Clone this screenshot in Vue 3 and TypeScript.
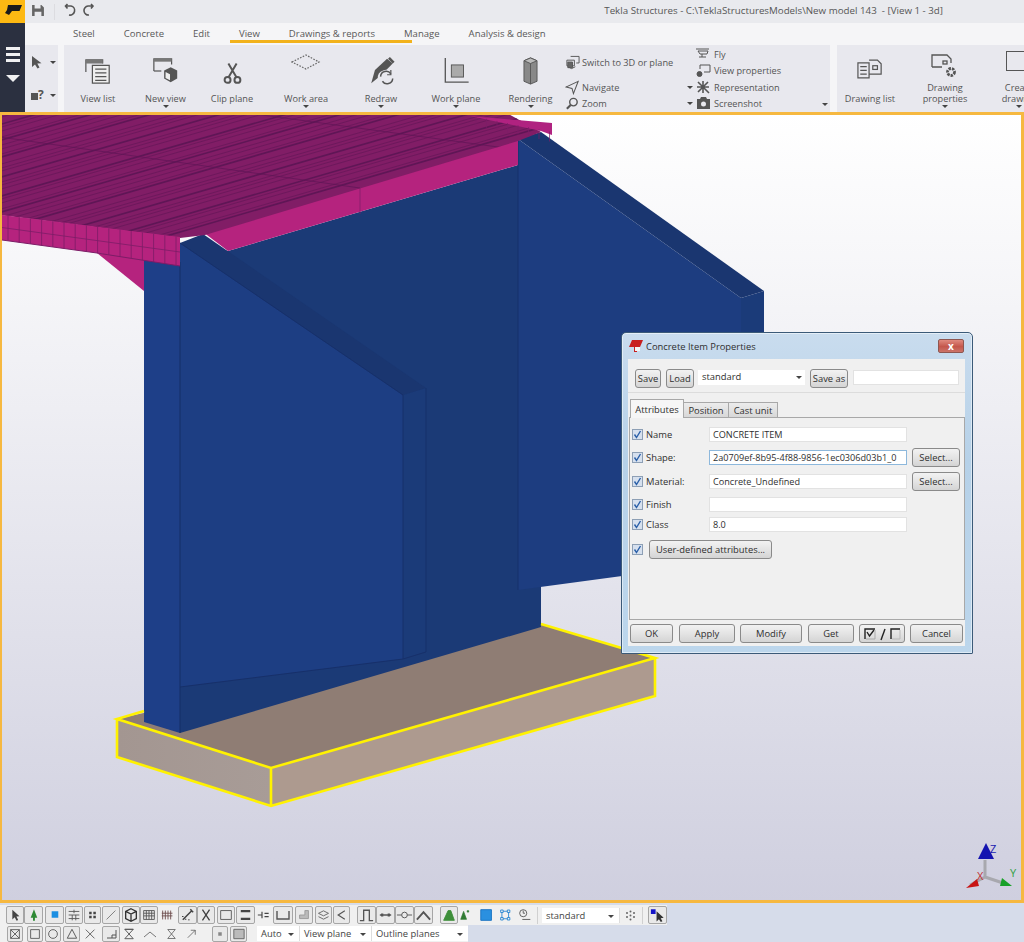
<script setup lang="ts">
// Tekla Structures window: ribbon, 3d model view, properties dialog, bottom toolbars

const tabs = ['Steel', 'Concrete', 'Edit', 'View', 'Drawings & reports', 'Manage', 'Analysis & design']

const bigTools = [
  { id: 'list', label: 'View list', w: 68, caret: false },
  { id: 'newview', label: 'New view', w: 67, caret: true },
  { id: 'clip', label: 'Clip plane', w: 66, caret: false },
  { id: 'area', label: 'Work area', w: 82, caret: true },
  { id: 'redraw', label: 'Redraw', w: 68, caret: true },
  { id: 'plane', label: 'Work plane', w: 82, caret: true },
  { id: 'render', label: 'Rendering', w: 67, caret: true },
]

// bridge slab hatching, runs along the long edge
const steps = [5, 3, 6, 4, 3, 7, 4, 3, 5, 6, 3, 4, 7, 3, 5, 4]
const slabLines: { y1: number; y2: number; w: number }[] = []
let off = 0
for (let i = 0; off < 260; i++) {
  off += steps[i % steps.length]
  const yA = 237 - off + 0.29 * 230
  const yB = 237 - off * 0.98 - 0.29 * 380
  slabLines.push({ y1: yA, y2: yB, w: i % 4 === 0 ? 1.6 : 0.6 })
}

const edgeCols = Array.from({ length: 16 }, (_, i) => {
  const x = 8 + i * 11.2
  const bottom = x < 97 ? 240 + (x - 2) * 0.137 : 253 + (x - 97) * 0.157
  return { x, top: 215 + (x - 2) * 0.124, bottom }
})
const tipCols = Array.from({ length: 8 }, (_, i) => {
  const x = 476 + i * 10.5
  return { x, top: 115.5 + (x - 470) * 0.2, bottom: 116 + (x - 470) * 0.22 + 8 }
})

type Tool = { x: number; w: number; box?: boolean; d?: string; fill?: string; stroke?: string; sw?: number }
const ink = '#555'
const row1: Tool[] = [
  { x: 6, w: 18, box: true, d: 'M6 3V14L8.6 11.5 10.8 15.5 12.6 14.5 10.6 10.6 14 10.4Z', fill: '#444' },
  { x: 24, w: 19, box: true, d: 'M9.5 3L13 12H10.5V15H8.5V12H6Z', fill: '#2f8a35' },
  { x: 45, w: 19, box: true, d: 'M6 5H13V12H6Z', fill: '#1c8fe2' },
  { x: 65, w: 18, box: true, d: 'M3 5H15M3 9H15M3 13H15M9 3V7M7 9V15M11 9V15' },
  { x: 84, w: 17, box: true, d: 'M5 5H8V8H5ZM10 5H13V8H10ZM5 10H8V13H5ZM10 10H13V13H10Z', fill: '#444' },
  { x: 102, w: 18, box: true, d: 'M4 14L14 4', stroke: '#777' },
  { x: 122, w: 18, box: true, d: 'M9 2L15 5V13L9 16 3 13V5ZM3 5L9 8 15 5M9 8V16', sw: 1.5, stroke: '#333' },
  { x: 140, w: 18, box: true, d: 'M3 4H15V14H3ZM3 7H15M3 10H15M6 4V14M9 4V14M12 4V14' },
  { x: 160, w: 16, d: 'M3 4V14M6 4V14M9 4V14M12 4V14M2 7H14M2 10H14', stroke: '#6b4a4a' },
  { x: 178, w: 19, box: true, d: 'M4 14L14 4M12 3L15 6M4 10V11M7 13V14M10 14H11', stroke: '#444', sw: 1.6 },
  { x: 197, w: 18, box: true, d: 'M5 3L13 15M13 3L5 15', sw: 1.5, stroke: '#444' },
  { x: 217, w: 18, box: true, d: 'M3 4H15V14H3Z' },
  { x: 236, w: 19, box: true, d: 'M4 5H14M4 13H14', sw: 2.4, stroke: '#444' },
  { x: 257, w: 15, d: 'M1 9H6M6 5V13M9 7H14M9 11H14', stroke: '#444', sw: 1.4 },
  { x: 273, w: 20, box: true, d: 'M3 5V13H15V5', sw: 1.4 },
  { x: 295, w: 18, box: true, d: 'M4 13H14V4H10V9H4Z', fill: '#bbb', stroke: '#999' },
  { x: 315, w: 17, box: true, d: 'M3 7L9 4 15 7 9 10ZM3 11L9 14 15 11' },
  { x: 333, w: 17, box: true, d: 'M13 4L5 9 13 14', sw: 1.4 },
  { x: 357, w: 19, box: true, d: 'M2 15H6V4H12V15H16', sw: 1.4 },
  { x: 376, w: 19, box: true, d: 'M3 9H15M5 8H6V10H5ZM12 8H13V10H12Z', sw: 1.4 },
  { x: 395, w: 19, box: true, d: 'M1 9H6M12 9H17M6 9A3 3 0 1 0 12 9A3 3 0 1 0 6 9Z' },
  { x: 414, w: 19, box: true, d: 'M2 14L9 6 16 14', sw: 2 },
  { x: 440, w: 18, box: true, d: 'M3 15L8 4H11L15 15Z', fill: '#3e8f3a', stroke: '#3e8f3a' },
  { x: 460, w: 13, d: 'M5 4L9 15H1ZM10 3H12V5H10Z', fill: '#2f7a32', stroke: '#2f7a32' },
  { x: 479, w: 16, d: 'M2 3H14V15H2Z', fill: '#2a90e0', stroke: '#1670c0' },
  { x: 499, w: 15, d: 'M2 3H5V6H2ZM10 3H13V6H10ZM2 12H5V15H2ZM10 12H13V15H10ZM5 4.5H10M5 13.5H10M3.5 6V12M11.5 6V12', stroke: '#1a80d0' },
  { x: 517, w: 16, d: 'M3 7A4 4 0 1 0 11 7A4 4 0 1 0 3 7ZM7 4V7H9M6 14H15' },
]
const row2: Tool[] = [
  { x: 7, w: 16, box: true, d: 'M3 3H13V13H3ZM3 3L13 13M13 3L3 13' },
  { x: 27, w: 16, box: true, d: 'M3 3H13V13H3Z' },
  { x: 45, w: 16, box: true, d: 'M3 8A5 5 0 1 0 13 8A5 5 0 1 0 3 8Z' },
  { x: 63, w: 17, box: true, d: 'M3.5 12.5L8.5 3 13.5 12.5Z' },
  { x: 84, w: 14, d: 'M2 3L12 13M12 3L2 13' },
  { x: 102, w: 18, box: true, d: 'M4 12H13V4M9 12V9H13', stroke: '#555' },
  { x: 122, w: 15, d: 'M3 3H12L3 13H12ZM3 3H12', stroke: '#555' },
  { x: 142, w: 16, d: 'M2 11L8 6 14 11', stroke: '#777' },
  { x: 167, w: 12, d: 'M1 2H11L1 14H11Z', stroke: '#555' },
  { x: 187, w: 12, d: 'M1 13L11 3M5 3H11V9', stroke: '#555' },
  { x: 212, w: 16, box: true, d: 'M6 6H10V10H6Z', fill: '#888' },
  { x: 230, w: 17, box: true, d: 'M3 3H14V13H3Z', fill: '#bbb', stroke: '#666' },
]
const withGaps = (list: Tool[]) => list.map((t, i) => ({
  ...t,
  gap: i === 0 ? t.x : t.x - list[i - 1].x - list[i - 1].w,
}))
const tools1 = withGaps(row1)
const tools2 = withGaps(row2)

const attrRows = [
  { label: 'Name', value: 'CONCRETE ITEM', select: false, focus: false, cls: '' },
  { label: 'Shape:', value: '2a0709ef-8b95-4f88-9856-1ec0306d03b1_0', select: true, focus: true, cls: 'tall' },
  { label: 'Material:', value: 'Concrete_Undefined', select: true, focus: false, cls: '' },
  { label: 'Finish', value: '', select: false, focus: false, cls: 'short' },
  { label: 'Class', value: '8.0', select: false, focus: false, cls: 'short' },
]
</script>

<template>
  <div class="app">
    <header class="titlebar">
      <div class="logo">
        <svg width="25" height="23" viewBox="0 0 25 23"><path d="M8 5H22L19.5 11H12L9 15 5 13 7 10Z" fill="#1b1b1b" /></svg>
      </div>
      <svg class="save" width="12" height="11" viewBox="0 0 14 13"><path d="M0 0H11L14 3V13H0ZM3 0V4H10V0ZM3 8V13H11V8Z" fill="#666" fill-rule="evenodd" /></svg>
      <span class="qsep" />
      <svg class="undo" width="32" height="14" viewBox="0 0 32 14" fill="none" stroke="#555" stroke-width="1.6">
        <path d="M2 3H7A4.5 4.5 0 0 1 5 12M3.5 1L1.5 3 3.5 5.5" />
        <path d="M28 3H24A4.5 4.5 0 0 0 25 12M27 1L29 3 27 5.5" />
      </svg>
      <span class="apptitle">Tekla Structures - C:\TeklaStructuresModels\New model 143&nbsp; - [View 1 - 3d]</span>
    </header>

    <nav class="tabbar">
      <span class="sidecap" />
      <div class="tabs">
        <span v-for="t in tabs" :key="t" class="tab">{{ t }}</span>
        <span class="tab-mark" />
      </div>
    </nav>

    <section class="ribbon">
      <aside class="side">
        <div class="burger"><i /><i /><i /></div>
        <span class="side-arrow" />
      </aside>

      <div class="pick">
        <div class="pick-row">
          <svg width="12" height="14" viewBox="0 0 12 14"><path d="M1 1V12L4 9.5 6.5 13.5 8.5 12.5 6.3 8.6 10.5 8.2Z" fill="#555" /></svg>
          <span class="caret" />
        </div>
        <div class="pick-row low">
          <span class="helpmark"><i />?</span>
          <span class="caret" />
        </div>
      </div>

      <div class="group view-group">
        <div v-for="tool in bigTools" :key="tool.id" class="big" :style="{ width: tool.w + 'px' }">
          <div class="big-icon">
            <svg v-if="tool.id === 'list'" width="28" height="28" viewBox="0 0 30 30" fill="none" stroke="#555" stroke-width="1.3">
              <path d="M2 16V3H20V7" /><path d="M2 3H20V7H2Z" fill="#777" stroke="none" />
              <path d="M9 9H27V28H9ZM12 13H24M12 17H24M12 21H24M12 25H24" fill="#eee" />
            </svg>
            <svg v-else-if="tool.id === 'newview'" width="28" height="28" viewBox="0 0 30 30" fill="none" stroke="#555" stroke-width="1.3">
              <path d="M2 15V2H21V8" /><path d="M2 2H21V5H2Z" fill="#777" stroke="none" />
              <path d="M2 15H10" />
              <path d="M20 11L27 14.5V23L20 27 13 23V14.5Z" fill="#555" stroke="none" />
              <path d="M14.5 16L19.3 18.5V25L14.5 22.5Z" fill="#eee" stroke="none" />
            </svg>
            <svg v-else-if="tool.id === 'clip'" class="scissors" width="21" height="23" viewBox="0 0 24 28" fill="none" stroke="#555" stroke-width="2.4">
              <path d="M7 3L17 20M17 3L7 20" />
              <circle cx="6" cy="23" r="3.6" /><circle cx="18" cy="23" r="3.6" />
            </svg>
            <svg v-else-if="tool.id === 'area'" class="up" width="30" height="18" viewBox="0 0 30 18" fill="none" stroke="#666" stroke-width="1.2" stroke-dasharray="1.6 1.4">
              <path d="M1 9L15 2 28 9 15 16Z" />
            </svg>
            <svg v-else-if="tool.id === 'redraw'" width="29" height="28" viewBox="0 0 30 30" fill="none">
              <path d="M21 2L27 7 14 20 4 28 8 14Z" fill="#555" />
              <path d="M22 2L24 0 29 5 27 7Z" fill="#555" />
              <path d="M13 23A6.5 6.5 0 0 1 25 19" stroke="#e8e8ee" stroke-width="4" />
              <path d="M14 21A6 6 0 0 1 25 18M27 23A6 6 0 0 1 16 26" stroke="#555" stroke-width="1.6" />
              <path d="M25 14V19H21" stroke="#555" stroke-width="1.3" />
            </svg>
            <svg v-else-if="tool.id === 'plane'" width="27" height="28" viewBox="0 0 28 30" fill="none">
              <path d="M2 1V27H27" stroke="#555" stroke-width="1.4" />
              <rect x="8.5" y="8.5" width="13" height="13" fill="#aaa" stroke="#555" />
            </svg>
            <svg v-else width="17" height="28" viewBox="0 0 18 30">
              <path d="M9 1L16 4V26L9 29 2 26V4Z" fill="#888" stroke="#555" />
              <path d="M2 4L9 7 16 4 9 1Z" fill="#bbb" stroke="#555" />
              <path d="M9 7V29" stroke="#555" />
            </svg>
          </div>
          <span class="big-label">{{ tool.label }}</span>
          <span v-if="tool.caret" class="caret under" />
        </div>

        <div class="small-col first">
          <div class="small">
            <svg width="15" height="15" viewBox="0 0 16 15" fill="none" stroke="#555"><path d="M6 1H15V8H12M2 5H10V11H2ZM3 12L7 14 11 12" /><path d="M3 7H8V13H3Z" fill="#666" /></svg>
            <span>Switch to 3D or plane</span>
          </div>
          <div class="small mt">
            <svg width="15" height="15" viewBox="0 0 16 15" fill="none" stroke="#555" stroke-width="1.1"><path d="M14 1L1 7 7.5 8.5 9 14Z" /></svg>
            <span>Navigate</span>
          </div>
          <div class="small">
            <svg width="15" height="15" viewBox="0 0 16 15" fill="none" stroke="#555" stroke-width="1.5"><circle cx="9" cy="6" r="4" /><path d="M6 9L2 13" stroke-width="2.2" /></svg>
            <span>Zoom</span>
          </div>
        </div>

        <div class="small-col second">
          <div class="small">
            <span class="pre" />
            <svg width="15" height="12" viewBox="0 0 15 12" fill="none" stroke="#555"><path d="M0 1H13M2 3H12L11 6H4ZM3 9H10M6 6V9" /></svg>
            <span>Fly</span>
          </div>
          <div class="small">
            <span class="pre" />
            <svg width="15" height="14" viewBox="0 0 15 14" fill="none" stroke="#555"><path d="M4 5V1H14V8H8" /><circle cx="3.5" cy="10" r="2.5" fill="#555" /></svg>
            <span>View properties</span>
          </div>
          <div class="small">
            <span class="pre"><span class="caret" /></span>
            <svg width="15" height="14" viewBox="0 0 15 14" fill="none" stroke="#555" stroke-width="1.6"><path d="M2 2L13 13M12 2L2 12M7 1V13M1 7H13" /></svg>
            <span>Representation</span>
          </div>
          <div class="small">
            <span class="pre"><span class="caret" /></span>
            <svg width="15" height="13" viewBox="0 0 15 13"><path d="M1 2H4L5 0H10L11 2H14V12H1ZM5 7A2.5 2.5 0 1 0 10 7A2.5 2.5 0 1 0 5 7Z" fill="#555" fill-rule="evenodd" /></svg>
            <span>Screenshot</span>
          </div>
        </div>
        <span class="caret group-caret" />
      </div>

      <div class="group draw-group">
        <div class="big draw-a">
          <div class="big-icon">
            <svg width="26" height="21" viewBox="0 0 28 22" fill="none" stroke="#555" stroke-width="1.3">
              <path d="M1 5H13V21H1ZM3.5 9H10.5M3.5 13H10.5M3.5 17H10.5" /><path d="M13 2H22L26 6V17H13" />
              <rect x="17" y="8" width="5" height="4" />
            </svg>
          </div>
          <span class="big-label">Drawing list</span>
        </div>
        <div class="big draw-b">
          <div class="big-icon">
            <svg width="28" height="26" viewBox="0 0 28 26" fill="none" stroke="#555" stroke-width="1.3">
              <path d="M1 13V1H16L20 5V9M1 13H11" /><rect x="12" y="7" width="4" height="3" />
              <circle cx="20" cy="18" r="3.5" stroke-width="2.8" stroke-dasharray="2.4 1" />
            </svg>
          </div>
          <span class="big-label two">Drawing<br />properties</span>
          <span class="caret under" />
        </div>
        <div class="big draw-c">
          <div class="big-icon">
            <span class="sheet" />
          </div>
          <span class="big-label two">Create<br />drawing</span>
          <span class="caret under" />
        </div>
      </div>
    </section>

    <main class="viewport">
      <svg class="model" width="1024" height="791" viewBox="0 112 1024 791">
        <defs>
          <clipPath id="slabclip"><path d="M0 112H505L541 132 518 141 205 235 180 238 0 215Z" /></clipPath>
          <linearGradient id="leftface" x1="0" x2="1" y1="0" y2="0">
            <stop offset="0" stop-color="#a39691" /><stop offset="1" stop-color="#a89c97" />
          </linearGradient>
        </defs>

        <!-- concrete pad under the wall -->
        <path d="M117 719L271 768 655 658 541 624Z" fill="#8f7d74" />
        <path d="M117 719L271 768V806L117 757Z" fill="url(#leftface)" />
        <path d="M271 768L655 658V696L271 806Z" fill="#ad9a8f" />

        <!-- gusset under the slab -->
        <path d="M97 253L144 258V291Z" fill="#b5237e" />

        <!-- wall and fins -->
        <path d="M180 243L228 251 518 165H541V627L180 733Z" fill="#1b3a76" />
        <path d="M144 258L180 262V733L144 722Z" fill="#1e3f88" />
        <path d="M180 243L403 395V659L180 687Z" fill="#1d3e83" />
        <path d="M403 395L426 388V652L403 659Z" fill="#1b3b79" />
        <path d="M180 243L203 234 426 388 403 395Z" fill="#1a3670" />
        <path d="M180 243L403 395V659L180 687M426 388V652L403 659" fill="none" stroke="#17306a" />
        <path d="M180 262V733" stroke="#152e66" />
        <path d="M518 139L741 298V560L518 590Z" fill="#1d3d80" />
        <path d="M741 298L764 291V556L741 560Z" fill="#1b3b79" />
        <path d="M518 139L541 132 764 291 741 298Z" fill="#1a3670" />
        <path d="M518 139V590" stroke="#17306a" />

        <!-- pink underside band -->
        <path d="M203 232L518 136V165L228 251Z" fill="#b5237e" />
        <path d="M360 186V214" stroke="#7c1d67" stroke-width="0.7" />

        <!-- slab top -->
        <g clip-path="url(#slabclip)">
          <path d="M0 112H560V260H0Z" fill="#811d66" />
          <line v-for="(l, i) in slabLines" :key="i" x1="-50" :y1="l.y1" x2="560" :y2="l.y2" stroke="#5f1656" :stroke-width="l.w" />
          <path d="M0 137L360 188M240 112L520 150" stroke="#5f1656" stroke-width="0.7" fill="none" />
        </g>
        <path d="M2 215L180 237V266L97 253 2 240Z" fill="#b5237e" />
        <path d="M2 227.5L180 252" stroke="#7c1d67" stroke-width="0.8" />
        <line v-for="c in edgeCols" :key="c.x" :x1="c.x" :y1="c.top" :x2="c.x" :y2="c.bottom" stroke="#7c1d67" stroke-width="0.8" />
        <path d="M2 240L97 253 180 266" fill="none" stroke="#7c1d67" />
        <path d="M470 116L552 123V135L541 131Z" fill="#b02280" />
        <line v-for="c in tipCols" :key="c.x" :x1="c.x" :y1="c.top" :x2="c.x" :y2="c.bottom" stroke="#7c1d67" stroke-width="0.7" />

        <!-- selected pad outline -->
        <path d="M144 711L117 719 271 768 655 658 541 624M117 719V757L271 806 655 696V658M271 768V806" fill="none" stroke="#fff200" stroke-width="2.6" stroke-linejoin="miter" />

        <!-- axis gizmo -->
        <path d="M985 860V877M985 877L970 885M985 877L1003 883" stroke="#a8a8ae" stroke-width="3" fill="none" />
        <path d="M986 843L994 859H978Z" fill="#1414b0" />
        <path d="M966 888L977 879 979 886Z" fill="#c81414" />
        <path d="M1012 886L1002 878 1000 886Z" fill="#18a028" />
        <text x="990" y="853" class="axis z">Z</text>
        <text x="1010" y="877" class="axis y">Y</text>
        <text x="977" y="880" class="axis x">X</text>
      </svg>
      <span class="vp-frame" />

      <!-- Concrete Item Properties dialog -->
      <div class="dlg">
        <div class="dlg-title">
          <svg width="15" height="12" viewBox="0 0 15 12">
            <path d="M4 0H15L12 7H9V12H6V7H1Z" fill="#c81e1e" /><path d="M7 7H12V11H7Z" fill="#f4f4f4" />
          </svg>
          <span>Concrete Item Properties</span>
          <button class="close" type="button">x</button>
        </div>
        <div class="dlg-body">
          <div class="dlg-top">
            <button class="btn save-btn" type="button">Save</button>
            <button class="btn load-btn" type="button">Load</button>
            <div class="combo">standard<span class="caret" /></div>
            <button class="btn saveas-btn" type="button">Save as</button>
            <div class="field saveas-field" />
          </div>
          <div class="dlg-tabs">
            <span class="dlg-tab active">Attributes</span>
            <span class="dlg-tab pos">Position</span>
            <span class="dlg-tab cast">Cast unit</span>
          </div>
          <div class="panel">
            <div v-for="r in attrRows" :key="r.label" class="attr" :class="r.cls">
              <span class="check"><svg width="9" height="9" viewBox="0 0 9 9"><path d="M1.5 4.5L3.5 7.5 7.5 1" fill="none" stroke="#2a5fa8" stroke-width="1.4" /></svg></span>
              <span class="attr-label">{{ r.label }}</span>
              <div class="field attr-field" :class="{ focus: r.focus }">{{ r.value }}</div>
              <button v-if="r.select" class="btn select-btn" type="button">Select...</button>
            </div>
            <div class="attr udef">
              <span class="check"><svg width="9" height="9" viewBox="0 0 9 9"><path d="M1.5 4.5L3.5 7.5 7.5 1" fill="none" stroke="#2a5fa8" stroke-width="1.4" /></svg></span>
              <button class="btn udef-btn" type="button">User-defined attributes...</button>
            </div>
          </div>
          <div class="dlg-foot">
            <button class="btn f-ok" type="button">OK</button>
            <button class="btn f-apply" type="button">Apply</button>
            <button class="btn f-modify" type="button">Modify</button>
            <button class="btn f-get" type="button">Get</button>
            <button class="btn f-toggle" type="button">
              <svg width="38" height="14" viewBox="0 0 38 14" fill="none" stroke="#222">
                <path d="M2 12V2H12" stroke-width="1.4" /><path d="M4 5L6.5 9 11 3" stroke-width="1.4" /><path d="M12 3V12H3" stroke="#aaa" />
                <path d="M18 13L22 2" stroke-width="1.4" />
                <path d="M28 12V2H37" stroke-width="1.4" /><path d="M37 3V12H29" stroke="#bbb" />
              </svg>
            </button>
            <button class="btn f-cancel" type="button">Cancel</button>
          </div>
        </div>
      </div>
    </main>

    <footer class="bars">
      <div class="bar one">
        <template v-for="(t, i) in tools1" :key="i">
          <span class="tool" :class="{ box: t.box }" :style="{ width: t.w + 'px', marginLeft: t.gap + 'px' }">
            <svg width="18" height="18" viewBox="0 0 18 18">
              <path :d="t.d" :fill="t.fill || 'none'" :stroke="t.fill && !t.stroke ? 'none' : (t.stroke || ink)" :stroke-width="t.sw || 1" />
            </svg>
          </span>
        </template>
        <span class="tsep a" />
        <div class="bar-combo std">standard<span class="caret" /></div>
        <svg class="dots" width="11" height="11" viewBox="0 0 11 11" fill="#666">
          <circle cx="2" cy="3" r="1" /><circle cx="5.5" cy="1.5" r="1" /><circle cx="9" cy="3" r="1" /><circle cx="2" cy="7" r="1" /><circle cx="5.5" cy="5.5" r="1" /><circle cx="9" cy="7" r="1" /><circle cx="5.5" cy="9.5" r="1" />
        </svg>
        <span class="tsep b" />
        <span class="tool box last">
          <svg width="18" height="18" viewBox="0 0 18 18"><path d="M2 3H7V8H2Z" fill="#1414c8" /><path d="M8 5V16L10.5 13.5 12.5 16.5 14.2 15.5 12.4 12.5 15.5 12Z" fill="#333" /></svg>
        </span>
      </div>
      <div class="bar two">
        <template v-for="(t, i) in tools2" :key="i">
          <span class="tool" :class="{ box: t.box }" :style="{ width: t.w + 'px', marginLeft: t.gap + 'px' }">
            <svg width="16" height="16" viewBox="0 0 16 16">
              <path :d="t.d" :fill="t.fill || 'none'" :stroke="t.fill && !t.stroke ? 'none' : (t.stroke || ink)" stroke-width="1" />
            </svg>
          </span>
        </template>
        <div class="bar-combo auto">Auto<span class="caret" /></div>
        <div class="bar-combo vplane">View plane<span class="caret" /></div>
        <div class="bar-combo outline">Outline planes<span class="caret" /></div>
      </div>
    </footer>
  </div>
</template>

<style scoped>
.app {
  width: 1024px;
  height: 942px;
  overflow: hidden;
  display: flex;
  flex-direction: column;
  font-family: "Open Sans", "Noto Sans", sans-serif;
  font-size: 9.4px;
  color: #555;
  background: #d6dcea;
}
button { font-family: inherit; padding: 0; margin: 0; }

/* ── title bar ─────────────────────────────── */
.titlebar {
  height: 23px;
  flex: none;
  display: flex;
  align-items: center;
  background: #e9eaee;
}
.logo { width: 25px; height: 23px; background: #fdb913; }
.logo svg { display: block; }
.save { margin-left: 7px; margin-top: -3px; }
.qsep { width: 1px; height: 16px; background: #dcdce0; margin-left: 10px; }
.undo { margin-left: 9px; margin-top: -3px; }
.apptitle {
  margin-left: auto;
  margin-right: 81px;
  margin-top: -2px;
  color: #565656;
  font-size: 9.75px;
}

/* ── tabs ──────────────────────────────────── */
.tabbar { height: 22px; flex: none; display: flex; background: #f5f5f7; }
.sidecap { width: 25px; background: #2b3040; }
.tabs {
  position: relative;
  display: flex;
  gap: 29px;
  padding-left: 48px;
  align-items: center;
  flex: 1;
  font-size: 9.55px;
}
.tab { margin-top: -2px; color: #595959; white-space: nowrap; }
.tab-mark {
  position: absolute;
  left: 205px;
  top: 17px;
  width: 182px;
  height: 3px;
  background: #f2b21c;
}

/* ── ribbon ────────────────────────────────── */
.ribbon { height: 67px; flex: none; display: flex; background: #f5f5f7; }
.side {
  width: 25px;
  background: #2b3040;
  display: flex;
  flex-direction: column;
  align-items: center;
  padding-top: 2px;
}
.burger i { display: block; width: 14px; height: 3px; background: #f0f0f2; margin-bottom: 3px; }
.side-arrow {
  margin-top: 10px;
  border-left: 7px solid transparent;
  border-right: 7px solid transparent;
  border-top: 7px solid #f0f0f2;
}
.pick {
  width: 33px;
  box-sizing: border-box;
  background: #e8e8ee;
  display: flex;
  flex-direction: column;
  padding: 10px 0 0 6px;
}
.pick-row { display: flex; align-items: center; gap: 7px; height: 14px; }
.pick-row.low { margin-top: 19px; gap: 6px; }
.helpmark { font-size: 12px; font-weight: 700; line-height: 12px; display: flex; align-items: flex-end; color: #555; }
.helpmark i { width: 7px; height: 7px; background: #555; display: block; margin-bottom: 1px; }
.group { background: #e8e8ee; display: flex; position: relative; }
.view-group { margin-left: 6px; width: 766px; }
.draw-group { margin-left: 7px; flex: 1; overflow: hidden; }
.big {
  position: relative;
  flex: none;
  display: flex;
  flex-direction: column;
  align-items: center;
  height: 67px;
}
.big-icon { height: 47px; margin-top: 2px; display: flex; align-items: center; justify-content: center; }
.big-icon .up { margin-top: -18px; }
.big-icon .scissors { margin-top: 3px; }
.big-label {
  text-align: center;
  font-size: 9.2px;
  line-height: 11px;
  white-space: nowrap;
  position: absolute;
  top: 48px;
}
.big-label.two { top: 37px; }
.caret {
  display: inline-block;
  width: 0;
  height: 0;
  border-left: 3px solid transparent;
  border-right: 3px solid transparent;
  border-top: 3px solid #444;
}
.under { position: absolute; top: 60px; left: 50%; margin-left: -3px; }
.small-col { display: flex; flex-direction: column; font-size: 9.2px; white-space: nowrap; }
.small-col.first { width: 125px; padding-left: 1px; padding-top: 9px; }
.small-col.first .small { gap: 2px; }
.small-col.second { padding-top: 1px; margin-left: -4px; }
.small { display: flex; align-items: center; gap: 3px; height: 16.6px; }
.small.mt { margin-top: 9px; }
.pre { width: 8px; display: flex; justify-content: center; margin-right: -1px; }
.group-caret { position: absolute; left: 758px; top: 58px; }
.draw-a { width: 66px; }
.draw-a .big-icon { margin-top: 0; }
.draw-b { width: 84px; }
.draw-b .big-icon { margin-top: 0; height: 44px; }
.draw-c { width: 60px; margin-left: 2px; }
.draw-c .big-icon { margin-top: -6px; height: 44px; }
.sheet { width: 28px; height: 18px; border: 1px solid #555; margin-left: 4px; }

/* ── model view ────────────────────────────── */
.viewport {
  position: relative;
  flex: 1;
  overflow: hidden;
  background: linear-gradient(180deg, #ffffff 0%, #f4f4f7 25%, #e3e3ec 60%, #cfcfdf 100%);
}
.model { position: absolute; left: 0; top: 0; display: block; }
.vp-frame {
  position: absolute;
  inset: 0;
  border: solid #f6b840;
  border-width: 3px 3px 3px 2px;
  pointer-events: none;
}
.axis { font-family: "Open Sans", sans-serif; font-size: 11px; }
.axis.z { fill: #2020b0; }
.axis.y { fill: #30a040; }
.axis.x { fill: #c03030; }

/* ── dialog ────────────────────────────────── */
.dlg {
  position: absolute;
  left: 621px;
  top: 220px;
  width: 352px;
  height: 322px;
  box-sizing: border-box;
  border: 1px solid #3b5a78;
  border-radius: 5px 5px 1px 1px;
  background: linear-gradient(180deg, #c9dcee 0%, #b6d1e8 40%, #bcd6ec 100%);
  display: flex;
  flex-direction: column;
  font-size: 9.4px;
  color: #2f2f2f;
  box-shadow: inset 0 0 0 1px rgba(255,255,255,0.5);
}
.dlg-title {
  height: 26px;
  flex: none;
  display: flex;
  align-items: center;
  gap: 3px;
  padding-left: 6px;
}
.close {
  margin-left: auto;
  margin-right: 8px;
  margin-top: -1px;
  width: 26px;
  height: 14px;
  border: 1px solid #8e5650;
  border-radius: 2px;
  background: linear-gradient(180deg, #e08a7f, #c4574c 55%, #cc7469);
  color: #fff;
  font-size: 10px;
  font-weight: 700;
  line-height: 10px;
}
.dlg-body {
  flex: 1;
  margin: 0 7px 7px 6px;
  background: #f0f0f0;
  display: flex;
  flex-direction: column;
  position: relative;
}
.dlg-top {
  height: 34px;
  flex: none;
  display: flex;
  align-items: flex-start;
  gap: 5px;
  padding: 10px 0 0 7px;
  box-sizing: border-box;
  border-bottom: 1px solid #dcdcdc;
}
.btn {
  height: 19px;
  box-sizing: border-box;
  border: 1px solid #8a8a8a;
  border-radius: 3px;
  background: linear-gradient(180deg, #f2f2f2, #e4e4e4 50%, #d4d4d4);
  color: #2f2f2f;
  font-size: 9.4px;
  white-space: nowrap;
  display: inline-flex;
  align-items: center;
  justify-content: center;
}
.save-btn { width: 26px; }
.load-btn { width: 28px; }
.combo {
  width: 107px;
  height: 15px;
  margin-left: -1px;
  margin-top: 1px;
  background: #fff;
  padding-left: 4px;
  box-sizing: border-box;
  line-height: 13px;
  position: relative;
}
.combo .caret { position: absolute; right: 3px; top: 6px; }
.saveas-btn { width: 38px; }
.field {
  background: #fff;
  border: 1px solid #e2e2e2;
  box-sizing: border-box;
  height: 15px;
  line-height: 13px;
  padding-left: 3px;
  white-space: nowrap;
  overflow: hidden;
}
.saveas-field { width: 106px; margin-top: 1px; }
.dlg-tabs { height: 24px; flex: none; display: flex; align-items: flex-end; padding-left: 2px; }
.dlg-tab {
  height: 15px;
  box-sizing: border-box;
  border: 1px solid #a8a8a8;
  border-bottom: none;
  background: linear-gradient(180deg, #ececec, #d8d8d8);
  display: flex;
  align-items: center;
  justify-content: center;
  margin-left: -1px;
}
.dlg-tab.active {
  width: 54px;
  height: 19px;
  background: #f6f6f6;
  margin-bottom: -1px;
  margin-left: 0;
  position: relative;
  z-index: 1;
}
.dlg-tab.pos { width: 46px; }
.dlg-tab.cast { width: 50px; }
.panel {
  width: 336px;
  height: 203px;
  flex: none;
  margin-left: 1px;
  box-sizing: border-box;
  border: 1px solid #a8a8a8;
  padding: 9px 0 0 2px;
}
.attr { display: flex; align-items: flex-start; height: 23px; position: relative; }
.attr.tall { height: 24px; }
.attr.short { height: 20px; }
.check {
  width: 11px;
  height: 11px;
  flex: none;
  box-sizing: border-box;
  margin-top: 2px;
  border: 1px solid #8d9fb5;
  background: #d6e0ee;
  display: flex;
  align-items: center;
  justify-content: center;
}
.attr-label { width: 63px; margin-left: 3px; line-height: 15px; flex: none; }
.attr-field { width: 198px; flex: none; font-size: 9.15px; }
.attr-field.focus { border-color: #8db8dc; }
.select-btn { width: 48px; margin-left: 5px; margin-top: -2px; }
.udef { margin-top: 1px; align-items: center; }
.udef .check { margin-top: 0; }
.udef-btn { width: 123px; margin-left: 6px; }
.dlg-foot { display: flex; padding: 4px 0 0 2px; }
.dlg-foot .btn { flex: none; }
.f-ok { width: 43px; }
.f-apply { width: 56px; margin-left: 6px; }
.f-modify { width: 62px; margin-left: 5px; }
.f-get { width: 46px; margin-left: 6px; }
.f-toggle { width: 46px; margin-left: 5px; }
.f-cancel { width: 53px; margin-left: 5px; }

/* ── bottom toolbars ───────────────────────── */
.bars { height: 39px; flex: none; display: flex; flex-direction: column; background: #d6dcea; font-size: 9.4px; color: #444; }
.bar { display: flex; align-items: center; background: #f0f0f0; }
.bar.one { width: 667px; height: 20px; margin-top: 2px; }
.bar.two { width: 468px; height: 17px; }
.tool {
  height: 18px;
  flex: none;
  box-sizing: border-box;
  display: flex;
  align-items: center;
  justify-content: center;
  overflow: hidden;
}
.two .tool { height: 16px; }
.tool.box { border: 1px solid #a6a6a6; border-radius: 2px; background: #e9e9e9; }
.tsep { width: 1px; height: 17px; background: #d0d0d0; flex: none; }
.tsep.a { margin-left: 4px; }
.tsep.b { margin-left: 6px; }
.bar-combo {
  background: #fff;
  height: 15px;
  line-height: 15px;
  padding-left: 4px;
  box-sizing: border-box;
  position: relative;
  flex: none;
  border-right: 1px solid #ddd;
}
.bar-combo .caret { position: absolute; right: 5px; top: 7px; }
.std { width: 78px; margin-left: 4px; }
.dots { margin-left: 5px; flex: none; }
.tool.last { width: 19px; margin-left: 5px; }
.auto { width: 43px; margin-left: 10px; }
.vplane { width: 72px; }
.outline { width: 96px; border-right: none; }
</style>

<style>
html, body { margin: 0; overflow: hidden; }
</style>
